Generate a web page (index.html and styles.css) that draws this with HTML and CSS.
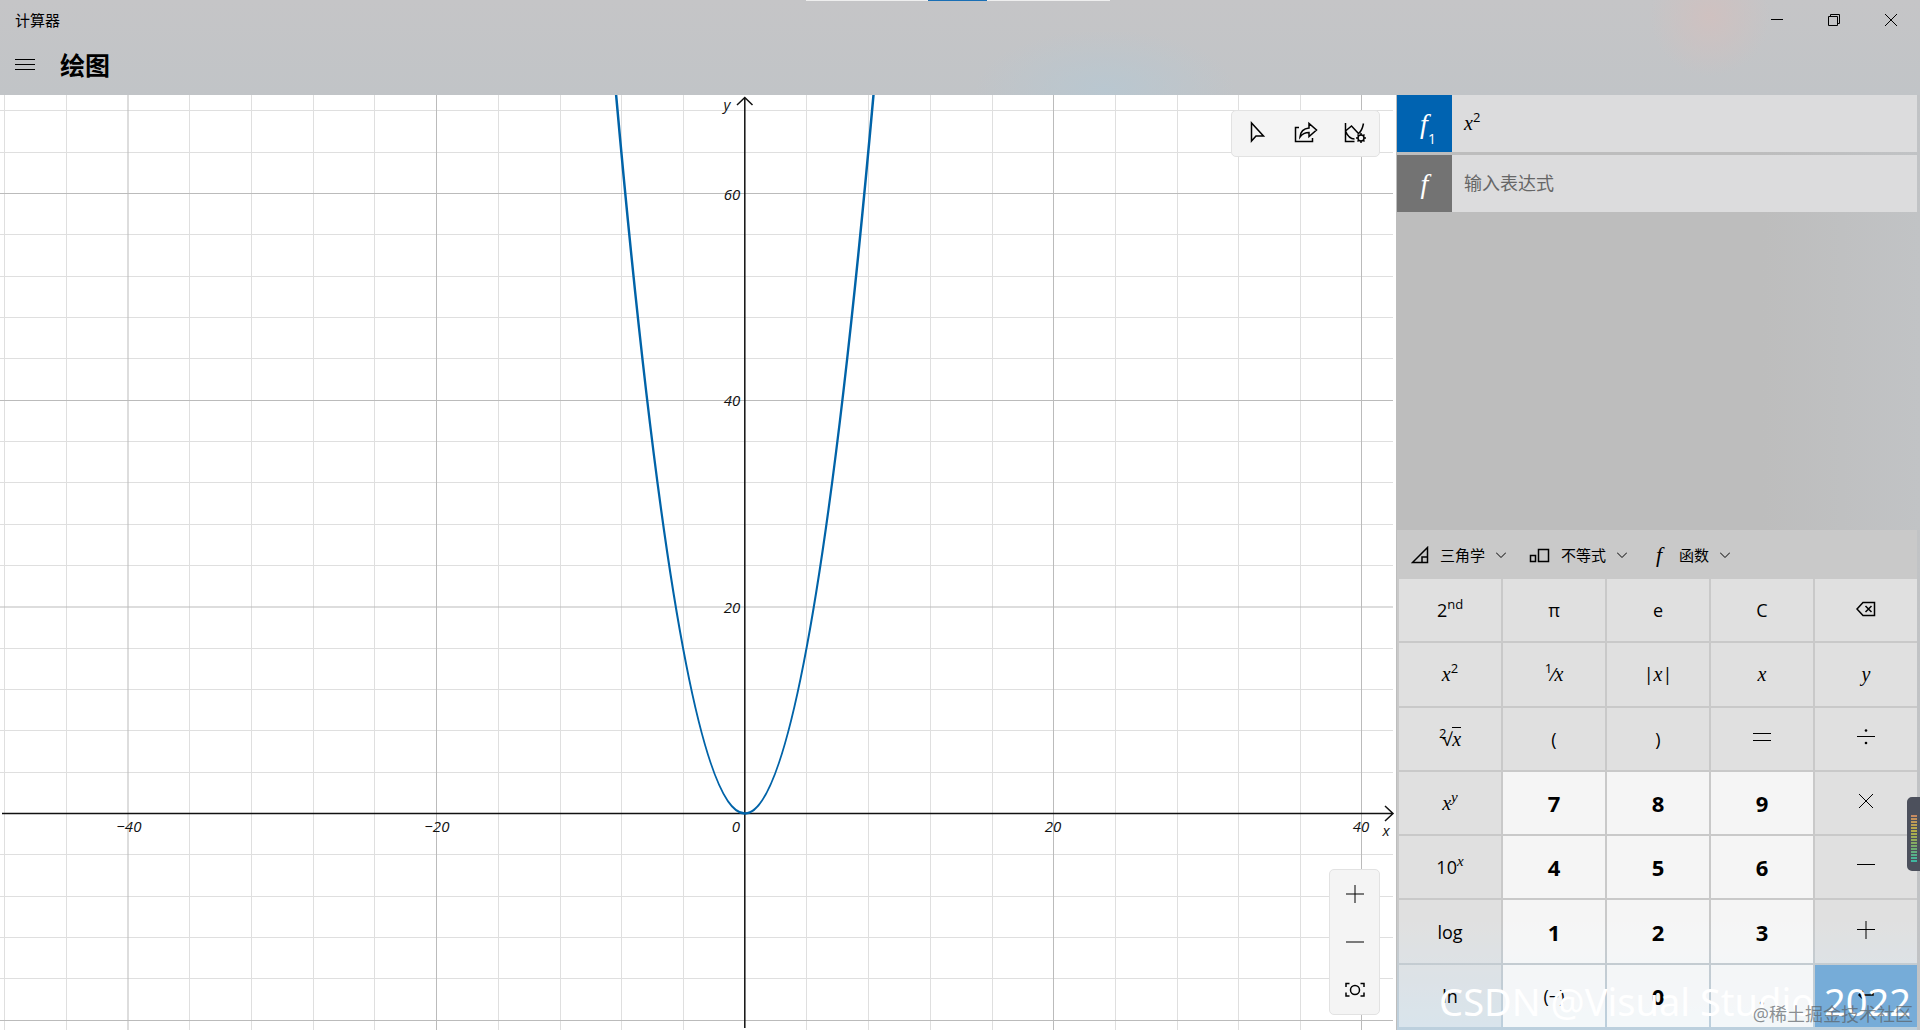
FILE: index.html
```
<!DOCTYPE html>
<html lang="zh-CN">
<head>
    <meta charset="UTF-8">
    <meta name="viewport" content="width=device-width, initial-scale=1.0">
    <title>计算器</title>
    <link rel="stylesheet" href="styles.css">
</head>
<body>
    <div class="pull-bar"></div>
    <header class="titlebar">
        <span class="app-name">计算器</span>
        <div class="window-buttons">
            <button aria-label="最小化"><svg width="14" height="14"><path d="M1 6.5h12"/></svg></button>
            <button aria-label="还原"><svg width="14" height="14"><path d="M1.500 3.500h9v9h-9zM3.500 3.500v-2h9v9h-2"/></svg></button>
            <button aria-label="关闭"><svg width="14" height="14"><path d="M1 1l12 12M13 1L1 13"/></svg></button>
        </div>
    </header>
    <div class="navbar">
        <button class="menu" aria-label="菜单"><svg width="20" height="14"><path d="M0 1.500h20M0 6.500h20M0 11.500h20"/></svg></button>
        <h1>绘图</h1>
    </div>
    <main class="content">
        <section class="graph">
            <svg class="plot" viewBox="0 0 1396 935" preserveAspectRatio="xMidYMid slice">
                <path class="minor" d="M4.500 0v935M66.500 0v935M189.500 0v935M251.500 0v935M313.500 0v935M374.500 0v935M498.500 0v935M560.500 0v935M621.500 0v935M683.500 0v935M806.500 0v935M868.500 0v935M930.500 0v935M992.500 0v935M1115.500 0v935M1177.500 0v935M1238.500 0v935M1300.500 0v935"/>
                <path class="minor" d="M0 15.500h1393M0 57.500h1393M0 139.500h1393M0 181.500h1393M0 222.500h1393M0 263.500h1393M0 346.500h1393M0 387.500h1393M0 429.500h1393M0 470.500h1393M0 553.500h1393M0 594.500h1393M0 635.500h1393M0 677.500h1393M0 759.500h1393M0 801.500h1393M0 842.500h1393M0 883.500h1393"/>
                <path class="major" d="M128 0v935M436.500 0v935M1053.500 0v935M1361.500 0v935M0 98.500h1393M0 305.500h1393M0 512h1393M0 925.500h1393"/>
                <path class="axis" d="M2 718.500h1391M744.800 3v930M737 10l7.800-7.500L752.500 10M1385 711l8 7.500-8 7.500"/>
                <path class="curve" d="M605.900-118.600Q744.800 1555.600 883.700-118.600"/>
                <g class="labels">
                    <text x="129" y="737">−40</text>
                    <text x="437" y="737">−20</text>
                    <text x="736" y="737">0</text>
                    <text x="1053" y="737">20</text>
                    <text x="1361" y="737">40</text>
                    <text x="1386" y="741">x</text>
                    <text x="732" y="105">60</text>
                    <text x="732" y="311">40</text>
                    <text x="732" y="518">20</text>
                    <text x="727" y="15">y</text>
                </g>
            </svg>
            <div class="panel tools">
                <button aria-label="跟踪"><svg width="24" height="24"><path d="M6.500 2v18l4.500-5h7.500z"/></svg></button>
                <button aria-label="共享"><svg width="24" height="24"><path d="M5 6.500H1.500v14h17V17M6 16c.5-5.500 4-8.500 9-9V2.500l7.500 6.500-7.500 6.500v-4c-4 0-6.500 1-9 4.500z"/></svg></button>
                <button aria-label="图形选项"><svg width="24" height="24"><path d="M2.500 2v18.500h9M2.500 10l6-5 7 7.500c3-2 4-5 5-10M2.500 10c2 5 5 8 9 8"/><circle cx="18" cy="17" r="3"/><path d="M18 12v2M18 20v2M13 17h2M21 17h2M14.500 13.500l1.500 1.500M20 19l1.500 1.500M21.500 13.500L20 15M16 19l-1.500 1.500"/></svg></button>
            </div>
            <div class="panel zoom">
                <button aria-label="放大"><svg width="20" height="20"><path d="M1 10h18M10 1v18"/></svg></button>
                <button aria-label="缩小"><svg width="20" height="20"><path d="M1 10h18"/></svg></button>
                <button aria-label="自动调整视图"><svg width="20" height="20"><path class="bold" d="M1 7V3.500h3.500M15.500 3.500H19V7M19 12.500V16h-3.500M4.500 16H1v-3.500"/><circle class="bold" cx="10" cy="10" r="4.500"/></svg></button>
            </div>
        </section>
        <aside class="side">
            <div class="equations">
                <div class="equation">
                    <button class="badge active">f<sub>1</sub></button>
                    <div class="expression" role="textbox" aria-label="表达式 1"><i>x</i><sup>2</sup></div>
                </div>
                <div class="equation">
                    <button class="badge">f</button>
                    <input class="expression" type="text" aria-label="表达式" placeholder="输入表达式">
                </div>
            </div>
            <div class="keypad">
                <div class="groups">
                    <button><svg class="bold" width="18" height="18"><path d="M1.500 16.500h15v-15zM11 16v-5h5"/></svg>三角学<svg width="10" height="6"><path d="M0 .5l5 5 5-5"/></svg></button>
                    <button><svg class="bold" width="21" height="18"><path d="M1.500 9.500h5v6h-5zM9.500 3.500h10v12h-10z"/></svg>不等式<svg width="10" height="6"><path d="M0 .5l5 5 5-5"/></svg></button>
                    <button><span class="func">f</span>函数<svg width="10" height="6"><path d="M0 .5l5 5 5-5"/></svg></button>
                </div>
                <div class="keys">
                    <button>2<sup>nd</sup></button>
                    <button>π</button>
                    <button>e</button>
                    <button>C</button>
                    <button aria-label="退格"><svg width="20" height="16"><path class="bold" d="M1 8l6-6.500h11.500v13H7zM9.500 5l6 6M15.500 5l-6 6"/></svg></button>

                    <button><i>x</i><sup>2</sup></button>
                    <button><sup>1</sup>⁄<i>x</i></button>
                    <button>|<i>x</i>|</button>
                    <button><i>x</i></button>
                    <button><i>y</i></button>

                    <button><sup class="index">2</sup>√<i class="root">x</i></button>
                    <button>(</button>
                    <button>)</button>
                    <button aria-label="等于"><svg width="18" height="18"><path d="M0 5.500h18M0 12.500h18"/></svg></button>
                    <button aria-label="除"><svg width="18" height="18"><path d="M0 8.500h18"/><circle class="dot" cx="9" cy="2.500" r="1.300"/><circle class="dot" cx="9" cy="15" r="1.300"/></svg></button>

                    <button><i>x</i><sup><i>y</i></sup></button>
                    <button class="digit">7</button>
                    <button class="digit">8</button>
                    <button class="digit">9</button>
                    <button aria-label="乘"><svg width="18" height="18"><path d="M2 2l14 14M16 2L2 16"/></svg></button>

                    <button>10<sup><i>x</i></sup></button>
                    <button class="digit">4</button>
                    <button class="digit">5</button>
                    <button class="digit">6</button>
                    <button aria-label="减"><svg width="18" height="18"><path d="M0 8.500h18"/></svg></button>

                    <button>log</button>
                    <button class="digit">1</button>
                    <button class="digit">2</button>
                    <button class="digit">3</button>
                    <button aria-label="加"><svg width="18" height="18"><path d="M0 8.500h18M9 0v18"/></svg></button>

                    <button>ln</button>
                    <button class="digit sign">(−)</button>
                    <button class="digit">0</button>
                    <button class="digit">.</button>
                    <button class="enter" aria-label="输入"><svg width="18" height="18"><path class="bold" d="M16 5v5H2M6 6l-4 4 4 4"/></svg></button>
                </div>
            </div>
        </aside>
    </main>
    <div class="meter"></div>
    <div class="watermark">CSDN @Visual Studio 2022</div>
    <div class="credit">@稀土掘金技术社区</div>
</body>
</html>
```
FILE: styles.css
```
* {
    box-sizing: border-box;
}
body {
    margin: 0;
    height: 100vh;
    display: flex;
    flex-direction: column;
    overflow: hidden;
    font-family: "Open Sans", "Noto Sans CJK SC", sans-serif;
    font-size: 15px;
    color: #000;
    background:
        radial-gradient(circle at 1710px 16px, #cfc1c0 0, transparent 60px),
        radial-gradient(ellipse 130px 60px at 1105px 90px, #b9c7d0 0, transparent 100%),
        linear-gradient(#c5c5c7, #c1c4c7 95px, #c1c4c7);
}
button {
    font: inherit;
    color: inherit;
    padding: 0;
    border: none;
    background: none;
    cursor: pointer;
}
svg {
    fill: none;
    stroke: #000;
    stroke-width: 1;
}
.bold { stroke-width: 1.5; }
.dot { fill: #000; stroke: none; }
i {
    font-family: "Liberation Serif", serif;
    font-style: italic;
}

/* title bar */
.pull-bar {
    position: absolute;
    top: 0;
    left: 42%;
    width: 304px;
    height: 1px;
    background: linear-gradient(90deg, #eee 122px, #1a6fb5 122px, #1a6fb5 181px, #eee 181px);
}
.titlebar {
    display: flex;
    justify-content: space-between;
    height: 40px;
    padding: 0 1px 0 15px;
    line-height: 40px;
}
.window-buttons { display: flex; }
.window-buttons button {
    width: 57px;
    height: 40px;
}
.window-buttons svg { display: block; margin: auto; }
.navbar {
    display: flex;
    align-items: center;
    height: 55px;
    padding: 0 0 5px 15px;
    gap: 25px;
}
.menu { display: flex; }
h1 {
    margin: 0;
    font-size: 25px;
    line-height: 32px;
    font-weight: bold;
}

/* graph */
.content {
    display: grid;
    grid-template-columns: 1396fr 524fr;
    flex: 1;
    min-height: 0;
}
.graph {
    position: relative;
    background: #fff;
}
.plot {
    position: absolute;
    width: 100%;
    height: 100%;
}
.minor { stroke: #dfdfdf; }
.major { stroke: #bbb; }
.axis { stroke: #111; stroke-width: 1.5; }
.curve { stroke: #0063a8; stroke-width: 2.5; }
.labels {
    fill: #111;
    stroke: none;
    font-size: 15px;
    font-style: italic;
    text-anchor: middle;
}
.panel {
    position: absolute;
    right: 16px;
    display: flex;
    background: #f4f4f4;
    border: 1px solid #e2e2e2;
    border-radius: 5px;
}
.panel button {
    display: flex;
    flex: 1;
    align-items: center;
    justify-content: center;
}
.tools {
    top: 15px;
    width: 149px;
    height: 47px;
    padding-bottom: 2px;
}
.tools svg { stroke-width: 1.5; }
.zoom {
    bottom: 15px;
    width: 51px;
    height: 146px;
    flex-direction: column;
}

/* side panel */
.side {
    display: flex;
    flex-direction: column;
    justify-content: space-between;
    padding: 0 3px 0 1px;
    background: linear-gradient(90deg, #bdbdbd 70%, #c1c3c5);
}
.equations {
    display: flex;
    flex-direction: column;
    gap: 3px;
}
.equation {
    display: flex;
    height: 57px;
}
.badge {
    width: 55px;
    color: #fff;
    background: #737373;
    font: italic 28px "Liberation Serif", serif;
}
.badge sub {
    font: 14px "Open Sans", sans-serif;
    line-height: 0;
    vertical-align: -11px;
}
.badge.active {
    padding-left: 7px;
    background: #0063b1;
}
.expression {
    flex: 1;
    padding: 0 12px;
    border: none;
    background: #dcdcdd;
    font: 18px/57px "Open Sans", "Noto Sans CJK SC", sans-serif;
}
.expression i { font-size: 20px; }
.expression::placeholder { color: #666; }
sup {
    font-size: 13px;
    line-height: 0;
    vertical-align: 8px;
}
.keypad {
    background: linear-gradient(#c9c9c9 78%, #bcd0de);
}
.groups {
    display: flex;
    height: 49px;
    padding-left: 14px;
    gap: 23px;
}
.groups button {
    display: flex;
    align-items: center;
    gap: 11px;
}
.func {
    width: 18px;
    font: italic 22px "Liberation Serif", serif;
}
.keys {
    display: grid;
    grid-template-columns: repeat(5, 1fr);
    grid-auto-rows: 1fr;
    gap: 2px;
    height: 451px;
    padding: 0 0 3px 2px;
}
.keys button {
    background: rgba(255, 255, 255, 0.43);
    font-size: 18px;
}
.keys i { font-size: 20px; }
.keys sup i { font-size: 15px; }
.keys .root { border-top: 1px solid #000; }
.keys .index { margin-right: -4px; }
.keys .digit {
    background: rgba(255, 255, 255, 0.82);
    font-size: 22px;
    font-weight: bold;
}
.keys .sign { font-size: 18px; font-weight: normal; }
.keys .enter { background: #76acd8; }

/* overlays */
.meter {
    position: absolute;
    right: 0;
    top: 797px;
    width: 13px;
    height: 74px;
    border: 4px solid #4c505c;
    border-top-width: 18px;
    border-right-width: 3px;
    border-bottom-width: 8px;
    border-radius: 5px 0 0 5px;
    background:
        repeating-linear-gradient(transparent 0 2px, #4c505c 2px 3px),
        linear-gradient(#c88963, #b5ad48, #76ab6b, #38b8a7);
}
.watermark,
.credit {
    position: absolute;
    white-space: nowrap;
    pointer-events: none;
}
.watermark {
    right: 9px;
    bottom: 4px;
    color: #fff;
    font: 38px/50px "Noto Sans", sans-serif;
}
.credit {
    right: 7px;
    bottom: 4px;
    color: rgba(90, 95, 100, 0.7);
    font-size: 18px;
    line-height: 24px;
}
```
